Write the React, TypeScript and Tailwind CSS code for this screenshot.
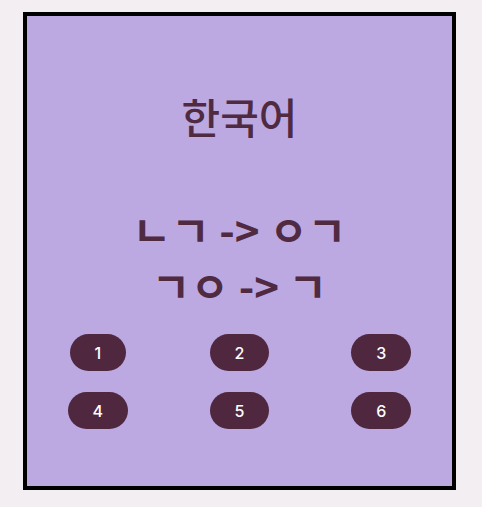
import React from "react";

const btns = ["1", "2", "3", "4", "5", "6"];

export default function App() {
  return (
    <div className="min-h-[507px] w-[482px] bg-[#f2eef2] pt-[12px] pl-[23px]">
      <div className="flex h-[478px] w-[433px] flex-col border-4 border-black bg-[#bca9e2]">
        <div
          className="mt-[70px] text-center text-[42px] font-medium leading-[60px] text-[#4f2a41]"
          style={{ fontFamily: '"Noto Sans CJK KR", sans-serif' }}
        >
          한국어
        </div>
        <div
          className="mt-[55px] text-center text-[42px] font-bold leading-[56px] text-[#4f2a41]"
          style={{ fontFamily: '"Noto Sans CJK KR", sans-serif' }}
        >
          <div>ㄴㄱ -&gt; ㅇㄱ</div>
          <div>ㄱㅇ -&gt; ㄱ</div>
        </div>
        <div className="mt-[21px] grid grid-cols-3 gap-y-[21px] justify-items-center">
          {btns.map((b) => (
            <button
              key={b}
              className="h-[37px] rounded-full bg-[#4f2840] px-[25px] text-[16px] font-medium text-white"
              style={{ fontFamily: 'Inter, sans-serif' }}
            >
              {b}
            </button>
          ))}
        </div>
      </div>
    </div>
  );
}
